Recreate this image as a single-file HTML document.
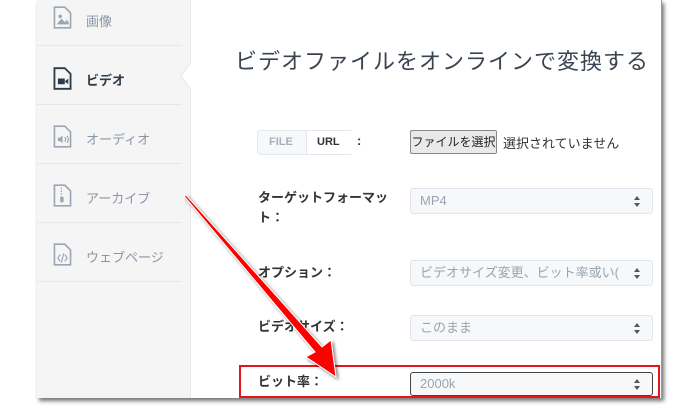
<!DOCTYPE html>
<html><head><meta charset="utf-8"><style>
body{margin:0;width:700px;height:407px;background:#fff;position:relative;overflow:hidden;font-family:"Liberation Sans","Noto Sans CJK JP",sans-serif;}
.frame{position:absolute;left:37px;top:0;width:624px;height:398px;background:#fff;box-shadow:2px 3px 4px rgba(0,0,0,.55);border-right:1px solid #999;}
.side{position:absolute;left:0;top:0;width:153px;height:398px;background:#f5f5f5;border-right:1px solid #e3e8ee;}
.item{position:absolute;left:0;width:145px;height:58px;border-bottom:1px solid #e3e8ee;}
.item span{position:absolute;left:49px;font-size:13px;color:#8a96a5;}
.item svg{position:absolute;left:16px;}
.t{position:absolute;font-size:13px;color:#333;}
.sel{position:absolute;left:373px;width:241px;height:24px;border:1px solid #dfe5ec;border-radius:3px;background:#f7f8fa;font-size:13px;color:#9aa4b0;line-height:24px;text-indent:9px;}
.ar{position:absolute;right:12px;top:7px;width:6px;height:11px;}
</style></head><body>
<div class="frame">
<div class="side">
 <div class="item" style="top:-13px"><svg width="19" height="23" viewBox="0 0 16 20" style="top:19px"><path d="M1 1h9l5 5v13H1z" fill="none" stroke="#9aa6b4" stroke-width="1.4"/><path d="M3 16l4-5 3 3 2-2 2 4z" fill="#9aa6b4"/><circle cx="6" cy="9" r="1.5" fill="#9aa6b4"/></svg><span style="top:24px">画像</span></div>
 <div class="item" style="top:46px;"><svg width="19" height="23" viewBox="0 0 16 20" style="top:21px"><path d="M1 1h9l5 5v13H1z" fill="none" stroke="#2d3a48" stroke-width="1.6"/><rect x="4" y="10" width="6" height="5" fill="#2d3a48"/><path d="M10 12.5l3-2.5v5z" fill="#2d3a48"/></svg><span style="top:24px;color:#2d3a48;font-weight:bold">ビデオ</span></div>
 <div class="item" style="top:105px"><svg width="19" height="23" viewBox="0 0 16 20" style="top:20px"><path d="M1 1h9l5 5v13H1z" fill="none" stroke="#9aa6b4" stroke-width="1.4"/><path d="M4 11h2l2-2v7l-2-2H4z" fill="#9aa6b4"/><path d="M10 10.5q1.5 2 0 4M12 9.5q2 3 0 6" fill="none" stroke="#9aa6b4"/></svg><span style="top:24px">オーディオ</span></div>
 <div class="item" style="top:164px"><svg width="19" height="23" viewBox="0 0 16 20" style="top:20px"><path d="M1 1h9l5 5v13H1z" fill="none" stroke="#9aa6b4" stroke-width="1.4"/><path d="M7 3v8" stroke="#9aa6b4" stroke-dasharray="1.5 1"/><rect x="6" y="11" width="3" height="5" rx="1" fill="#9aa6b4"/></svg><span style="top:24px">アーカイブ</span></div>
 <div class="item" style="top:223px"><svg width="19" height="23" viewBox="0 0 16 20" style="top:20px"><path d="M1 1h9l5 5v13H1z" fill="none" stroke="#9aa6b4" stroke-width="1.4"/><path d="M6 10l-2 3 2 3M10 10l2 3-2 3M9 9l-2 8" fill="none" stroke="#9aa6b4"/></svg><span style="top:24px">ウェブページ</span></div>
</div>
<svg style="position:absolute;left:143px;top:62px" width="12" height="28"><path d="M11 0L1 14 11 28" fill="#fff" stroke="#e3e8ee"/><rect x="11" y="0" width="1" height="28" fill="#fff"/></svg>
<div style="position:absolute;left:198px;top:44px;font-size:22px;color:#3a4450;letter-spacing:1px">ビデオファイルをオンラインで変換する</div>
<div style="position:absolute;left:220px;top:130px;width:94px;height:23px;border:1px solid #e3e8ee;border-radius:3px;background:#f7f8fa;font-size:11px;font-weight:bold;line-height:23px;">
 <span style="position:absolute;left:11px;color:#a5b0bd">FILE</span><span style="position:absolute;left:48px;top:0;width:46px;height:23px;border-left:1px solid #e3e8ee;background:#fff;color:#333;text-indent:10px">URL</span></div>
<div class="t" style="left:320px;top:133px;font-weight:bold">:</div>
<div style="position:absolute;left:373px;top:130px;width:85px;height:22px;border:1px solid #888;background:#e9e9e9;font-size:12px;line-height:22px;text-align:center;color:#222;border-radius:2px">ファイルを選択</div>
<div class="t" style="left:466px;top:133px;font-size:13px">選択されていません</div>
<div class="t" style="left:221px;top:188px;line-height:20px;font-weight:bold">ターゲットフォーマッ<br>ト：</div>
<div class="sel" style="top:188px">MP4<svg class="ar" viewBox="0 0 6 11"><path d="M0 4L3 0 6 4zM0 7L3 11 6 7z" fill="#555"/></svg></div>
<div class="t" style="left:221px;top:262px;font-weight:bold">オプション：</div>
<div class="sel" style="top:260px">ビデオサイズ変更、ビット率或い(<svg class="ar" viewBox="0 0 6 11"><path d="M0 4L3 0 6 4zM0 7L3 11 6 7z" fill="#555"/></svg></div>
<div class="t" style="left:221px;top:316px;font-weight:bold">ビデオサイズ：</div>
<div class="sel" style="top:315px">このまま<svg class="ar" viewBox="0 0 6 11"><path d="M0 4L3 0 6 4zM0 7L3 11 6 7z" fill="#555"/></svg></div>
<div class="t" style="left:221px;top:371px;font-weight:bold">ビット率：</div>
<div class="sel" style="top:372px;border-color:#444;background:#f7f8fa;height:22px;line-height:22px">2000k<svg class="ar" style="top:6px" viewBox="0 0 6 11"><path d="M0 4L3 0 6 4zM0 7L3 11 6 7z" fill="#555"/></svg></div>
<div style="position:absolute;left:202px;top:365px;width:417px;height:29px;border:2px solid #e8141c;"></div>
</div>
<svg style="position:absolute;left:0;top:0" width="700" height="407"><defs><filter id="s"><feDropShadow dx="2" dy="2" stdDeviation="1.5" flood-color="#000" flood-opacity=".5"/></filter></defs>
<path d="M184 196L186 195L322 347L331 340L336 377L306 357L315 352Z" fill="#f00" stroke="#fff" stroke-width="1" filter="url(#s)"/></svg>
</body></html>
